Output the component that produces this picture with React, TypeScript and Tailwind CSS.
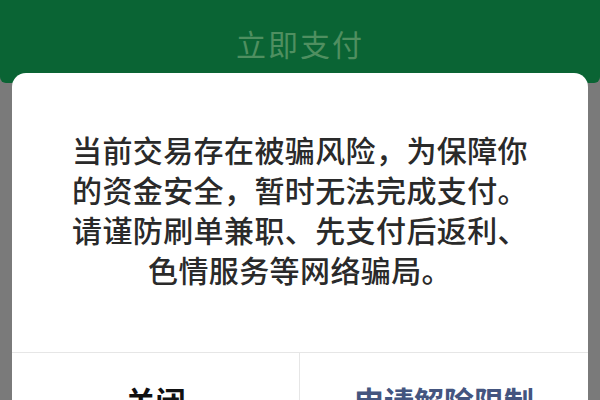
export default function App() {
  const lines = [
    "当前交易存在被骗风险，为保障你",
    "的资金安全，暂时无法完成支付。",
    "请谨防刷单兼职、先支付后返利、",
    "色情服务等网络骗局。",
  ];

  return (
    <div
      className="w-[600px] h-[400px] overflow-hidden bg-[#7a7a7a]"
      style={{ fontFamily: '"Noto Sans CJK SC", "Noto Sans", sans-serif' }}
    >
      {/* pay button under the overlay */}
      <div className="h-[83px] rounded-b-[6px] bg-[#0a6434] flex items-center justify-center pt-[3px]">
        <span className="text-[30px] leading-none tracking-[2px] text-[#4f8f60]">立即支付</span>
      </div>

      {/* risk dialog */}
      <div className="relative -mt-[10px] mx-[12px] bg-white rounded-t-[14px]">
        <div className="pt-[56px] pb-[63px] text-center text-[30px] leading-[40px] tracking-[0.4px] font-medium text-[#2a2a2a]">
          {lines.map((line) => (
            <div key={line}>{line}</div>
          ))}
        </div>
        <div className="grid grid-cols-2 border-t border-[#e6e6e6] h-[100px]">
          <button className="border-r border-[#e6e6e6] flex items-center justify-center pb-[4px] text-[30px] font-bold text-[#111]">
            关闭
          </button>
          <button className="flex items-center justify-center pb-[4px] text-[30px] font-bold text-[#44557f]">
            申请解除限制
          </button>
        </div>
      </div>
    </div>
  );
}
